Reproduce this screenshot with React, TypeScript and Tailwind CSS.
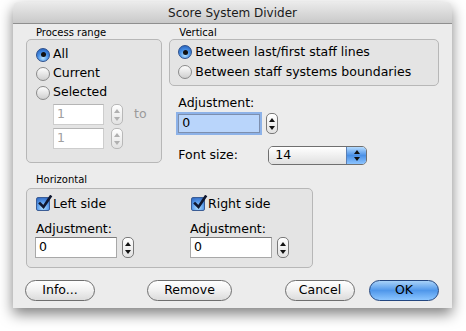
import React from 'react';

const font = "font-['DejaVu_Sans',sans-serif]";

function Radio({ on }: { on?: boolean }) {
  if (on) {
    return (
      <div className="w-[14px] h-[14px] rounded-full border border-[#2b4f8c] bg-[radial-gradient(circle_at_50%_75%,#b7e3ff_0%,#4a92e6_45%,#1d56b4_100%)] flex items-center justify-center shrink-0">
        <div className="w-[5px] h-[5px] rounded-full bg-[#111]" />
      </div>
    );
  }
  return (
    <div className="w-[14px] h-[14px] rounded-full border border-[#8a8a8a] bg-linear-to-b from-[#fdfdfd] to-[#cfcfcf] shrink-0" />
  );
}

function Check() {
  return (
    <div className="relative w-[14px] h-[14px] rounded-[2px] border border-[#3b5d95] bg-[radial-gradient(circle_at_50%_80%,#b7e3ff_0%,#5a9ceb_50%,#2c63bd_100%)] shrink-0">
      <svg className="absolute -top-[3px] left-[1px]" width="15" height="15" viewBox="0 0 15 15">
        <path d="M2 8.5 L5.5 12 L12.5 1.5" fill="none" stroke="#101830" strokeWidth="2.6" strokeLinecap="square" />
      </svg>
    </div>
  );
}

function Stepper({ dim }: { dim?: boolean }) {
  const c = dim ? '#b0b0b0' : '#111';
  return (
    <div className={`w-[12px] h-[21px] rounded-[5px] border ${dim ? 'border-[#b8b8b8]' : 'border-[#7a7a7a]'} bg-linear-to-b from-white to-[#e2e2e2] flex flex-col items-center justify-center gap-[4px] shrink-0`}>
      <svg width="6" height="4" viewBox="0 0 6 4"><path d="M3 0 L6 4 L0 4 Z" fill={c} /></svg>
      <svg width="6" height="4" viewBox="0 0 6 4"><path d="M0 0 L6 0 L3 4 Z" fill={c} /></svg>
    </div>
  );
}

function Field({ value, w, dim }: { value: string; w: string; dim?: boolean }) {
  return (
    <div className={`${w} h-[21px] bg-white border ${dim ? 'border-[#cdcdcd] border-t-[#b5b5b5] text-[#a0a0a0]' : 'border-[#a8a8a8] border-t-[#7c7c7c] text-black'} pl-[3px] flex items-center leading-none`}>
      {value}
    </div>
  );
}

function Button({ label, w, primary }: { label: string; w: string; primary?: boolean }) {
  return (
    <div
      className={`${w} h-[21px] rounded-full border flex items-center justify-center ${
        primary
          ? 'border-[#23467f] bg-linear-to-b from-[#a8d2f8] via-[#4f97ea] to-[#8cc6ff] text-black'
          : 'border-[#6f6f6f] bg-linear-to-b from-white via-[#f0f0f0] to-[#dcdcdc] text-black'
      }`}
    >
      {label}
    </div>
  );
}

export default function App() {
  return (
    <div className={`min-h-screen bg-white pt-[2px] pl-[13px] ${font} text-[12.5px] text-black`}>
      <div className="w-[439px] h-[306px] rounded-t-[6px] bg-[#ececec] shadow-[0_6px_14px_rgba(0,0,0,0.5)] flex flex-col overflow-hidden">
        {/* Title bar */}
        <div className="h-[22px] shrink-0 border-b border-[#8f8f8f] bg-linear-to-b from-[#ebebeb] to-[#c9c9c9] flex items-center justify-center text-[12px] text-[#1a1a1a]">
          Score System Divider
        </div>

        <div className="px-[13px] pt-[2px] flex flex-col">
          <div className="flex items-start">
            {/* Process range */}
            <div className="w-[138px] flex flex-col">
              <div className="h-[13px] pl-[10px] text-[10px] leading-[13px]">Process range</div>
              <div className="h-[124px] rounded-[5px] border border-[#b7b7b7] bg-[#e4e4e4] pl-[9px] pt-[5px] flex flex-col">
                <div className="h-[19px] flex items-center gap-[3px]"><Radio on />All</div>
                <div className="h-[19px] flex items-center gap-[3px]"><Radio />Current</div>
                <div className="h-[19px] flex items-center gap-[3px]"><Radio />Selected</div>
                <div className="ml-[17px] mt-[2px] flex items-center">
                  <Field value="1" w="w-[51px]" dim />
                  <div className="ml-[7px]"><Stepper dim /></div>
                  <span className="ml-[11px] text-[#9a9a9a]">to</span>
                </div>
                <div className="ml-[17px] mt-[3px] flex items-center">
                  <Field value="1" w="w-[51px]" dim />
                  <div className="ml-[7px]"><Stepper dim /></div>
                </div>
              </div>
            </div>

            {/* Vertical */}
            <div className="ml-[7px] w-[273px] flex flex-col">
              <div className="h-[13px] pl-[10px] text-[10px] leading-[13px]">Vertical</div>
              <div className="h-[47px] rounded-[5px] border border-[#b7b7b7] bg-[#e4e4e4] pl-[8px] pt-[2px] flex flex-col">
                <div className="h-[20px] flex items-center gap-[3px]"><Radio on />Between last/first staff lines</div>
                <div className="h-[20px] flex items-center gap-[3px]"><Radio />Between staff systems boundaries</div>
              </div>
              <div className="ml-[9px] mt-[9px] h-[15px] leading-[15px]">Adjustment:</div>
              <div className="ml-[9px] mt-[3px] flex items-center">
                <div className="w-[82px] h-[19px] bg-[#b9d5fb] border border-[#7d8fae] shadow-[0_0_0_2px_#8db2e8] pl-[3px] flex items-center leading-none">0</div>
                <div className="ml-[6px]"><Stepper /></div>
              </div>
              <div className="ml-[9px] mt-[12px] flex items-center">
                <span className="w-[90px]">Font size:</span>
                <div className="w-[99px] h-[19px] rounded-[5px] border border-[#6f6f6f] overflow-hidden flex">
                  <div className="flex-1 bg-linear-to-b from-white to-[#e0e0e0] pl-[6px] flex items-center leading-none">14</div>
                  <div className="w-[20px] border-l border-[#5a7fb5] bg-linear-to-b from-[#b5dcff] via-[#4a90e6] to-[#8cc4ff] flex flex-col items-center justify-center gap-[3px]">
                    <svg width="6" height="4" viewBox="0 0 6 4"><path d="M3 0 L6 4 L0 4 Z" fill="#111" /></svg>
                    <svg width="6" height="4" viewBox="0 0 6 4"><path d="M0 0 L6 0 L3 4 Z" fill="#111" /></svg>
                  </div>
                </div>
              </div>
            </div>
          </div>

          {/* Horizontal */}
          <div className="mt-[8px] h-[13px] pl-[10px] text-[10px] leading-[13px]">Horizontal</div>
          <div className="mt-[2px] w-[287px] h-[80px] rounded-[5px] border border-[#b7b7b7] bg-[#e4e4e4] pl-[9px] pt-[6px] flex">
            <div className="w-[154px] flex flex-col">
              <div className="h-[18px] flex items-center gap-[3px]"><Check />Left side</div>
              <div className="mt-[8px] h-[15px] leading-[15px]">Adjustment:</div>
              <div className="-ml-[1px] mt-[1px] flex items-center">
                <Field value="0" w="w-[82px]" />
                <div className="ml-[5px]"><Stepper /></div>
              </div>
            </div>
            <div className="flex flex-col">
              <div className="h-[18px] flex items-center gap-[3px] ml-[1px]"><Check />Right side</div>
              <div className="mt-[8px] h-[15px] leading-[15px]">Adjustment:</div>
              <div className="mt-[1px] flex items-center">
                <Field value="0" w="w-[82px]" />
                <div className="ml-[5px]"><Stepper /></div>
              </div>
            </div>
          </div>

          {/* Buttons */}
          <div className="mt-[12px] -ml-[1px] flex">
            <Button label="Info..." w="w-[70px]" />
            <div className="ml-[52px]"><Button label="Remove" w="w-[85px]" /></div>
            <div className="ml-[53px]"><Button label="Cancel" w="w-[70px]" /></div>
            <div className="ml-[14px]"><Button label="OK" w="w-[70px]" primary /></div>
          </div>
        </div>
      </div>
    </div>
  );
}
